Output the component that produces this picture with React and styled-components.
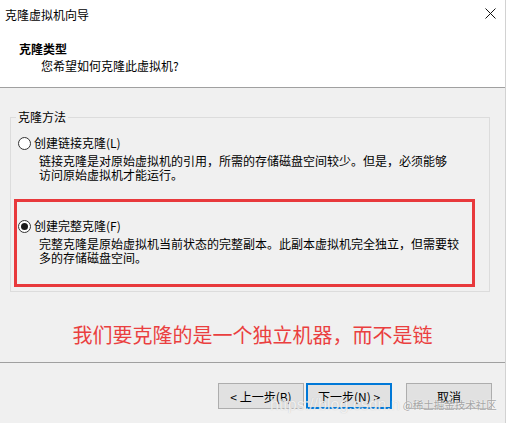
import React from 'react';
import styled, { createGlobalStyle } from 'styled-components';

const GlobalStyle = createGlobalStyle`
  html, body {
    margin: 0;
    padding: 0;
    background: #f0f0f0;
  }
  body {
    font-family: "Noto Sans CJK SC", "Noto Sans", sans-serif;
    font-size: 12px;
    color: #000;
  }
`;

const Window = styled.div`
  position: relative;
  width: 506px;
  height: 423px;
  box-sizing: border-box;
  display: flex;
  flex-direction: column;
  background: #f0f0f0;
  border-right: 1px solid #d2d2d2;
  overflow: hidden;
`;

const Header = styled.header`
  height: 88px;
  box-sizing: border-box;
  background: #fff;
  border-bottom: 1px solid #a0a0a0;
  display: flex;
  flex-direction: column;
`;

const TitleBar = styled.div`
  height: 28px;
  display: flex;
  align-items: center;
  justify-content: space-between;
  padding: 0 9px 0 5px;
  font-size: 12px;
`;

const CloseButton = styled.span`
  display: flex;
  width: 11px;
  height: 11px;
  margin-top: -2px;
`;

const HeaderText = styled.div`
  padding: 12px 0 0 19px;
  line-height: 17px;
`;

const Heading = styled.div`
  font-weight: bold;
`;

const SubHeading = styled.div`
  padding-left: 22px;
`;

const Body = styled.main`
  height: 275px;
  box-sizing: border-box;
  border-bottom: 1px solid #a0a0a0;
  padding: 21px 0 0 10px;
  display: flex;
  flex-direction: column;
`;

const GroupBox = styled.fieldset`
  width: 480px;
  height: 183px;
  box-sizing: border-box;
  margin: 0;
  padding: 0 0 0 5px;
  min-width: 0;
  border: 1px solid #dcdcdc;
  display: flex;
  flex-direction: column;
`;

const Legend = styled.legend`
  padding: 0 2px;
  line-height: 16px;
`;

const Option = styled.div`
  display: flex;
  flex-direction: column;
  margin-left: ${(p) => (p.$highlight ? '-2px' : '2px')};
  margin-top: ${(p) => (p.$highlight ? '17px' : '10px')};
  width: ${(p) => (p.$highlight ? '461px' : 'auto')};
  box-sizing: border-box;
  border: ${(p) => (p.$highlight ? '3px solid #e8393c' : 'none')};
  padding: ${(p) => (p.$highlight ? '16px 0 19px 1px' : '0')};
`;

const RadioRow = styled.label`
  display: flex;
  align-items: center;
  line-height: 16px;
  gap: 3px;
`;

const Radio = styled.span`
  width: 13px;
  height: 13px;
  box-sizing: border-box;
  border-radius: 50%;
  border: 1px solid #333;
  background: #fff;
  display: flex;
  align-items: center;
  justify-content: center;

  &::after {
    content: '';
    width: 7px;
    height: 7px;
    border-radius: 50%;
    background: ${(p) => (p.$checked ? '#1a1a1a' : 'transparent')};
  }
`;

const Description = styled.div`
  margin: 3px 0 0 21px;
  line-height: 14px;
  white-space: pre-line;
`;

const Annotation = styled.div`
  margin: 30px 0 0 -10px;
  text-align: center;
  font-size: 20px;
  line-height: 26px;
  color: #ea3f3f;
`;

const Footer = styled.footer`
  flex: 1;
  display: flex;
  justify-content: flex-end;
  align-items: flex-start;
  padding: 20px 13px 0 0;
`;

const Button = styled.button`
  width: 86px;
  height: 26px;
  box-sizing: border-box;
  margin-left: ${(p) => p.$gap || 0}px;
  background: #e1e1e1;
  border: ${(p) => (p.$focused ? '2px solid #0078d7' : '1px solid #adadad')};
  font-family: "Noto Sans CJK SC", "Noto Sans", sans-serif;
  font-size: 12px;
  color: #000;
  padding: 0;
`;

// blog watermark stamped over the bottom right of the screenshot
const Watermark = styled.div`
  position: absolute;
  left: 270px;
  top: 396px;
  display: flex;
  align-items: center;
  gap: 3px;
  white-space: nowrap;
  pointer-events: none;
`;

const WatermarkUrl = styled.span`
  font-family: "Liberation Sans", Arial, sans-serif;
  font-size: 16px;
  line-height: 18px;
  color: rgba(255, 255, 255, 0.75);
  text-shadow: 0 0 1px rgba(160, 160, 160, 0.6);
`;

const WatermarkSite = styled.span`
  font-size: 10.5px;
  line-height: 14px;
  color: rgba(150, 150, 150, 0.85);
  text-shadow: 0 0 2px #fff;
`;

const CloseIcon = () => (
  <svg width="11" height="11" viewBox="0 0 11 11">
    <path d="M0.5 0.5 L10.5 10.5 M10.5 0.5 L0.5 10.5" stroke="#111" strokeWidth="1" fill="none" />
  </svg>
);

export default function App() {
  return (
    <>
      <GlobalStyle />
      <Window>
        <Header>
          <TitleBar>
            <span>克隆虚拟机向导</span>
            <CloseButton><CloseIcon /></CloseButton>
          </TitleBar>
          <HeaderText>
            <Heading>克隆类型</Heading>
            <SubHeading>您希望如何克隆此虚拟机?</SubHeading>
          </HeaderText>
        </Header>
        <Body>
          <GroupBox>
            <Legend>克隆方法</Legend>
            <Option>
              <RadioRow>
                <Radio />
                创建链接克隆(L)
              </RadioRow>
              <Description>
                {'链接克隆是对原始虚拟机的引用，所需的存储磁盘空间较少。但是，必须能够\n访问原始虚拟机才能运行。'}
              </Description>
            </Option>
            <Option $highlight>
              <RadioRow>
                <Radio $checked />
                创建完整克隆(F)
              </RadioRow>
              <Description>
                {'完整克隆是原始虚拟机当前状态的完整副本。此副本虚拟机完全独立，但需要较\n多的存储磁盘空间。'}
              </Description>
            </Option>
          </GroupBox>
          <Annotation>我们要克隆的是一个独立机器，而不是链</Annotation>
        </Body>
        <Footer>
          <Button>&lt; 上一步(B)</Button>
          <Button $focused $gap={2}>下一步(N) &gt;</Button>
          <Button $gap={14}>取消</Button>
        </Footer>
        <Watermark>
          <WatermarkUrl>https://blog.csdn.n</WatermarkUrl>
          <WatermarkSite>@稀土掘金技术社区</WatermarkSite>
        </Watermark>
      </Window>
    </>
  );
}
